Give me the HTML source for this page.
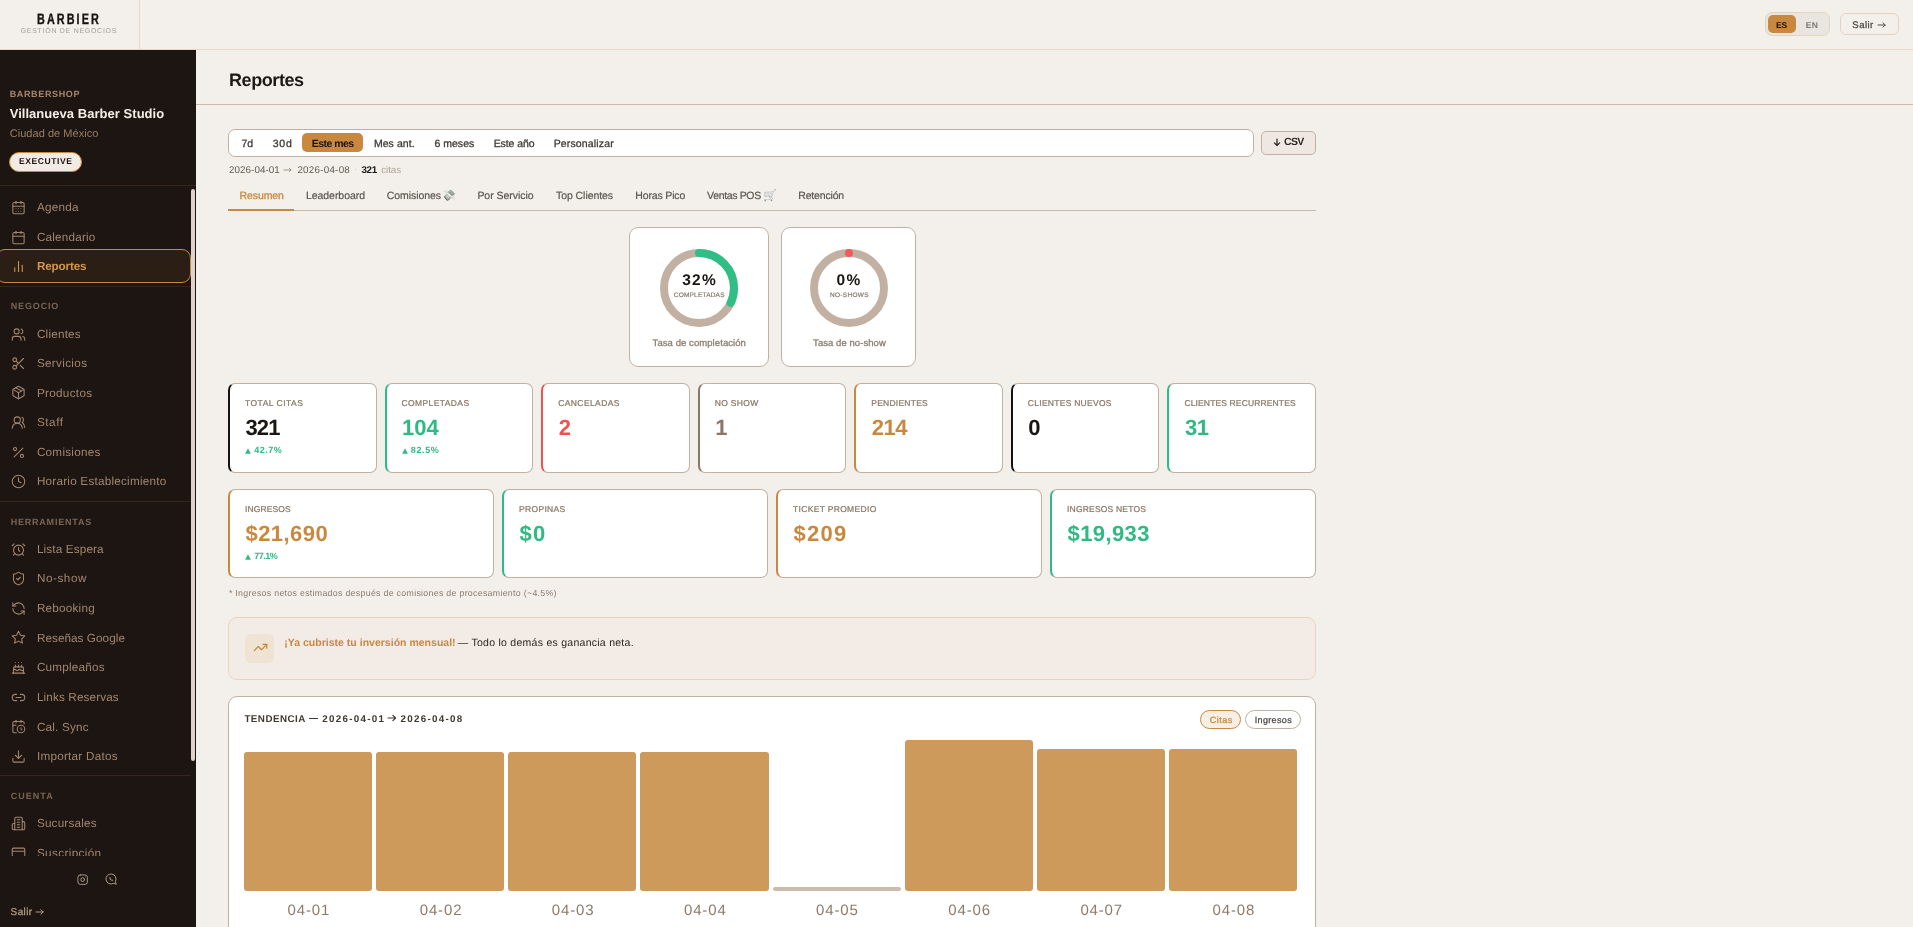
<!DOCTYPE html>
<html><head><meta charset="utf-8"><title>Reportes</title>
<style>
html,body{margin:0;padding:0}
body{width:1913px;height:927px;overflow:hidden;position:relative;background:#f3f0eb;font-family:"Liberation Sans", sans-serif}
.t{position:absolute;white-space:nowrap;line-height:1;font-family:"Liberation Sans", sans-serif;text-rendering:geometricPrecision}
b{font-weight:700}
</style></head><body>
<div id="root" style="position:absolute;left:0;top:0;width:1913px;height:927px;overflow:hidden;will-change:transform">
<div style="position:absolute;left:0px;top:0px;width:1913px;height:50px;box-sizing:border-box;background:#f3f0eb;border-bottom:1px solid #ead7c0"></div>
<div style="position:absolute;left:139px;top:0px;width:1px;height:49px;box-sizing:border-box;background:#ead7c0"></div>
<div class="t" style="left:37px;top:11.9px;font-size:15px;font-weight:700;color:#151210;letter-spacing:2.9px;transform:scaleX(0.72);transform-origin:0 0;-webkit-text-stroke:0.35px #151210">BARBIER</div>
<div class="t" style="left:20.70px;top:28.17px;font-size:7px;color:#a49e98;font-weight:400;letter-spacing:0.713px;">GESTIÓN DE NEGOCIOS</div>
<div style="position:absolute;left:1765px;top:12px;width:65px;height:24px;box-sizing:border-box;border:1px solid #e6d2bb;border-radius:7px;background:#e9e5e0"></div>
<div style="position:absolute;left:1768px;top:15px;width:28px;height:18px;box-sizing:border-box;background:#c8893f;border-radius:5px"></div>
<div class="t" style="left:1776.00px;top:20.70px;font-size:8.5px;color:#1a1410;font-weight:700;letter-spacing:-0.144px;">ES</div>
<div class="t" style="left:1805.80px;top:20.70px;font-size:8.5px;color:#7b7975;font-weight:700;letter-spacing:0.288px;">EN</div>
<div style="position:absolute;left:1840px;top:13px;width:59px;height:22px;box-sizing:border-box;border:1px solid #e6d2bb;border-radius:6px"></div>
<div class="t" style="left:1852.30px;top:20.76px;font-size:9.5px;color:#4a4541;font-weight:400;letter-spacing:0.496px;-webkit-text-stroke:0.27px #4a4541;">Salir</div>
<svg style="position:absolute;left:1876.9px;top:19.6px" width="9.199999999999818" height="10" viewBox="1876.9 19.6 9.199999999999818 10"><path d="M1877.9 24.6 H1885.1 M1882.8999999999999 22.400000000000002 L1885.1 24.6 L1882.8999999999999 26.8" fill="none" stroke="#4f4a46" stroke-width="1.0" stroke-linecap="round" stroke-linejoin="round"/></svg>
<div style="position:absolute;left:0px;top:50px;width:196px;height:877px;box-sizing:border-box;background:#1c1511"></div>
<div class="t" style="left:9.70px;top:89.78px;font-size:9px;color:#a8876a;font-weight:700;letter-spacing:0.643px;">BARBERSHOP</div>
<div class="t" style="left:9.70px;top:107.00px;font-size:13px;color:#f4eee7;font-weight:700;letter-spacing:0.037px;">Villanueva Barber Studio</div>
<div class="t" style="left:9.70px;top:128.89px;font-size:11px;color:#9a7f68;font-weight:400;letter-spacing:0.043px;">Ciudad de México</div>
<div style="position:absolute;left:9px;top:152px;width:73px;height:20px;box-sizing:border-box;background:#f2ebe3;border:1.5px solid #c8893f;border-radius:10px"></div>
<div class="t" style="left:18.90px;top:157.20px;font-size:8.5px;color:#1c1511;font-weight:700;letter-spacing:0.614px;">EXECUTIVE</div>
<div style="position:absolute;left:0px;top:185px;width:196px;height:1px;box-sizing:border-box;background:#33261c"></div>
<div style="position:absolute;left:0;top:186px;width:196px;height:670px;overflow:hidden">
<div style="position:absolute;left:-4px;top:63px;width:195px;height:34px;box-sizing:border-box;background:#2b1f15;border:1px solid #c8893f;border-radius:9px"></div>
<svg style="position:absolute;left:11.00px;top:13.70px" width="15" height="15" viewBox="0 0 24 24" fill="none" stroke="#a2866f" stroke-width="1.7" stroke-linecap="round" stroke-linejoin="round"><path d="M8 2v4"/><path d="M16 2v4"/><rect width="18" height="18" x="3" y="4" rx="2"/><path d="M3 10h18"/><path d="M8 14h.01"/><path d="M12 14h.01"/><path d="M16 14h.01"/><path d="M8 18h.01"/><path d="M12 18h.01"/><path d="M16 18h.01"/></svg>
<div class="t" style="left:36.90px;top:16.20px;font-size:11.7px;color:#a2866f;font-weight:400;letter-spacing:0.261px;">Agenda</div>
<svg style="position:absolute;left:11.00px;top:43.80px" width="15" height="15" viewBox="0 0 24 24" fill="none" stroke="#a2866f" stroke-width="1.7" stroke-linecap="round" stroke-linejoin="round"><path d="M8 2v4"/><path d="M16 2v4"/><rect width="18" height="18" x="3" y="4" rx="2"/><path d="M3 10h18"/></svg>
<div class="t" style="left:36.90px;top:46.30px;font-size:11.7px;color:#a2866f;font-weight:400;letter-spacing:0.208px;">Calendario</div>
<svg style="position:absolute;left:11.00px;top:72.90px" width="15" height="15" viewBox="0 0 24 24" fill="none" stroke="#d4964a" stroke-width="1.7" stroke-linecap="round" stroke-linejoin="round"><line x1="18" x2="18" y1="20" y2="10"/><line x1="12" x2="12" y1="20" y2="4"/><line x1="6" x2="6" y1="20" y2="14"/></svg>
<div class="t" style="left:36.90px;top:75.40px;font-size:11.7px;color:#d4964a;font-weight:700;letter-spacing:-0.139px;">Reportes</div>
<div style="position:absolute;left:0px;top:100px;width:191px;height:1px;box-sizing:border-box;background:#33261c"></div>
<div class="t" style="left:10.70px;top:115.58px;font-size:9px;color:#7a6554;font-weight:700;letter-spacing:0.864px;">NEGOCIO</div>
<svg style="position:absolute;left:11.00px;top:140.50px" width="15" height="15" viewBox="0 0 24 24" fill="none" stroke="#a2866f" stroke-width="1.7" stroke-linecap="round" stroke-linejoin="round"><path d="M16 21v-2a4 4 0 0 0-4-4H6a4 4 0 0 0-4 4v2"/><circle cx="9" cy="7" r="4"/><path d="M22 21v-2a4 4 0 0 0-3-3.87"/><path d="M16 3.13a4 4 0 0 1 0 7.75"/></svg>
<div class="t" style="left:36.90px;top:143.00px;font-size:11.7px;color:#a2866f;font-weight:400;letter-spacing:0.224px;">Clientes</div>
<svg style="position:absolute;left:11.00px;top:169.80px" width="15" height="15" viewBox="0 0 24 24" fill="none" stroke="#a2866f" stroke-width="1.7" stroke-linecap="round" stroke-linejoin="round"><circle cx="6" cy="6" r="3"/><path d="M8.12 8.12 12 12"/><path d="M20 4 8.12 15.88"/><circle cx="6" cy="18" r="3"/><path d="M14.8 14.8 20 20"/></svg>
<div class="t" style="left:36.90px;top:172.30px;font-size:11.7px;color:#a2866f;font-weight:400;letter-spacing:0.335px;">Servicios</div>
<svg style="position:absolute;left:11.00px;top:199.30px" width="15" height="15" viewBox="0 0 24 24" fill="none" stroke="#a2866f" stroke-width="1.7" stroke-linecap="round" stroke-linejoin="round"><path d="M11 21.73a2 2 0 0 0 2 0l7-4A2 2 0 0 0 21 16V8a2 2 0 0 0-1-1.73l-7-4a2 2 0 0 0-2 0l-7 4A2 2 0 0 0 3 8v8a2 2 0 0 0 1 1.73z"/><path d="M12 22V12"/><path d="m3.3 7 7.703 4.734a2 2 0 0 0 1.994 0L20.7 7"/><path d="m7.5 4.27 9 5.15"/></svg>
<div class="t" style="left:36.90px;top:201.80px;font-size:11.7px;color:#a2866f;font-weight:400;letter-spacing:0.322px;">Productos</div>
<svg style="position:absolute;left:11.00px;top:228.90px" width="15" height="15" viewBox="0 0 24 24" fill="none" stroke="#a2866f" stroke-width="1.7" stroke-linecap="round" stroke-linejoin="round"><path d="M18 21a8 8 0 0 0-16 0"/><circle cx="10" cy="8" r="5"/><path d="M22 20c0-3.37-2-6.5-4-8a5 5 0 0 0-.45-8.3"/></svg>
<div class="t" style="left:36.90px;top:231.40px;font-size:11.7px;color:#a2866f;font-weight:400;letter-spacing:0.593px;">Staff</div>
<svg style="position:absolute;left:11.00px;top:258.60px" width="15" height="15" viewBox="0 0 24 24" fill="none" stroke="#a2866f" stroke-width="1.7" stroke-linecap="round" stroke-linejoin="round"><line x1="19" x2="5" y1="5" y2="19"/><circle cx="6.5" cy="6.5" r="2.5"/><circle cx="17.5" cy="17.5" r="2.5"/></svg>
<div class="t" style="left:36.90px;top:261.10px;font-size:11.7px;color:#a2866f;font-weight:400;letter-spacing:0.271px;">Comisiones</div>
<svg style="position:absolute;left:11.00px;top:287.90px" width="15" height="15" viewBox="0 0 24 24" fill="none" stroke="#a2866f" stroke-width="1.7" stroke-linecap="round" stroke-linejoin="round"><circle cx="12" cy="12" r="10"/><polyline points="12 6 12 12 16 14"/></svg>
<div class="t" style="left:36.90px;top:290.40px;font-size:11.7px;color:#a2866f;font-weight:400;letter-spacing:0.237px;">Horario Establecimiento</div>
<div style="position:absolute;left:0px;top:315px;width:191px;height:1px;box-sizing:border-box;background:#33261c"></div>
<div class="t" style="left:10.70px;top:331.98px;font-size:9px;color:#7a6554;font-weight:700;letter-spacing:0.787px;">HERRAMIENTAS</div>
<svg style="position:absolute;left:11.00px;top:355.60px" width="15" height="15" viewBox="0 0 24 24" fill="none" stroke="#a2866f" stroke-width="1.7" stroke-linecap="round" stroke-linejoin="round"><circle cx="12" cy="13" r="8"/><path d="M12 9v4l2 2"/><path d="M5 3 2 6"/><path d="m22 6-3-3"/><path d="M6.38 18.7 4 21"/><path d="M17.64 18.67 20 21"/></svg>
<div class="t" style="left:36.90px;top:358.10px;font-size:11.7px;color:#a2866f;font-weight:400;letter-spacing:0.157px;">Lista Espera</div>
<svg style="position:absolute;left:11.00px;top:384.80px" width="15" height="15" viewBox="0 0 24 24" fill="none" stroke="#a2866f" stroke-width="1.7" stroke-linecap="round" stroke-linejoin="round"><path d="M20 13c0 5-3.5 7.5-7.66 8.95a1 1 0 0 1-.67-.01C7.5 20.5 4 18 4 13V6a1 1 0 0 1 1-1c2 0 4.5-1.2 6.24-2.72a1.17 1.17 0 0 1 1.52 0C14.51 3.81 17 5 19 5a1 1 0 0 1 1 1z"/><path d="m9 12 2 2 4-4"/></svg>
<div class="t" style="left:36.90px;top:387.30px;font-size:11.7px;color:#a2866f;font-weight:400;letter-spacing:0.562px;">No-show</div>
<svg style="position:absolute;left:11.00px;top:414.70px" width="15" height="15" viewBox="0 0 24 24" fill="none" stroke="#a2866f" stroke-width="1.7" stroke-linecap="round" stroke-linejoin="round"><path d="M21 12a9 9 0 0 0-9-9 9.75 9.75 0 0 0-6.74 2.74L3 8"/><path d="M3 3v5h5"/><path d="M3 12a9 9 0 0 0 9 9 9.75 9.75 0 0 0 6.74-2.74L21 16"/><path d="M16 16h5v5"/></svg>
<div class="t" style="left:36.90px;top:417.20px;font-size:11.7px;color:#a2866f;font-weight:400;letter-spacing:0.239px;">Rebooking</div>
<svg style="position:absolute;left:11.00px;top:444.30px" width="15" height="15" viewBox="0 0 24 24" fill="none" stroke="#a2866f" stroke-width="1.7" stroke-linecap="round" stroke-linejoin="round"><polygon points="12 2 15.09 8.26 22 9.27 17 14.14 18.18 21.02 12 17.77 5.82 21.02 7 14.14 2 9.27 8.91 8.26 12 2"/></svg>
<div class="t" style="left:36.90px;top:446.80px;font-size:11.7px;color:#a2866f;font-weight:400;letter-spacing:0.071px;">Reseñas Google</div>
<svg style="position:absolute;left:11.00px;top:473.80px" width="15" height="15" viewBox="0 0 24 24" fill="none" stroke="#a2866f" stroke-width="1.7" stroke-linecap="round" stroke-linejoin="round"><path d="M20 21v-8a2 2 0 0 0-2-2H6a2 2 0 0 0-2 2v8"/><path d="M4 16s.5-1 2-1 2.5 2 4 2 2.5-2 4-2 2.5 2 4 2 2-1 2-1"/><path d="M2 21h20"/><path d="M7 8v3"/><path d="M12 8v3"/><path d="M17 8v3"/><path d="M7 4h.01"/><path d="M12 4h.01"/><path d="M17 4h.01"/></svg>
<div class="t" style="left:36.90px;top:476.30px;font-size:11.7px;color:#a2866f;font-weight:400;letter-spacing:0.242px;">Cumpleaños</div>
<svg style="position:absolute;left:11.00px;top:503.70px" width="15" height="15" viewBox="0 0 24 24" fill="none" stroke="#a2866f" stroke-width="1.7" stroke-linecap="round" stroke-linejoin="round"><path d="M9 17H7A5 5 0 0 1 7 7h2"/><path d="M15 7h2a5 5 0 1 1 0 10h-2"/><line x1="8" x2="16" y1="12" y2="12"/></svg>
<div class="t" style="left:36.90px;top:506.20px;font-size:11.7px;color:#a2866f;font-weight:400;letter-spacing:0.146px;">Links Reservas</div>
<svg style="position:absolute;left:11.00px;top:533.20px" width="15" height="15" viewBox="0 0 24 24" fill="none" stroke="#a2866f" stroke-width="1.7" stroke-linecap="round" stroke-linejoin="round"><path d="M21 7.5V6a2 2 0 0 0-2-2H5a2 2 0 0 0-2 2v14a2 2 0 0 0 2 2h3.5"/><path d="M16 2v4"/><path d="M8 2v4"/><path d="M3 10h5"/><path d="M17.5 17.5 16 16.3V14"/><circle cx="16" cy="16" r="6"/></svg>
<div class="t" style="left:36.90px;top:535.70px;font-size:11.7px;color:#a2866f;font-weight:400;letter-spacing:0.211px;">Cal. Sync</div>
<svg style="position:absolute;left:11.00px;top:562.80px" width="15" height="15" viewBox="0 0 24 24" fill="none" stroke="#a2866f" stroke-width="1.7" stroke-linecap="round" stroke-linejoin="round"><path d="M21 15v4a2 2 0 0 1-2 2H5a2 2 0 0 1-2-2v-4"/><polyline points="7 10 12 15 17 10"/><line x1="12" x2="12" y1="15" y2="3"/></svg>
<div class="t" style="left:36.90px;top:565.30px;font-size:11.7px;color:#a2866f;font-weight:400;letter-spacing:0.262px;">Importar Datos</div>
<div style="position:absolute;left:0px;top:589px;width:191px;height:1px;box-sizing:border-box;background:#33261c"></div>
<div class="t" style="left:10.70px;top:605.58px;font-size:9px;color:#7a6554;font-weight:700;letter-spacing:1.031px;">CUENTA</div>
<svg style="position:absolute;left:11.00px;top:629.80px" width="15" height="15" viewBox="0 0 24 24" fill="none" stroke="#a2866f" stroke-width="1.7" stroke-linecap="round" stroke-linejoin="round"><path d="M6 22V4a2 2 0 0 1 2-2h8a2 2 0 0 1 2 2v18Z"/><path d="M6 12H4a2 2 0 0 0-2 2v6a2 2 0 0 0 2 2h2"/><path d="M18 9h2a2 2 0 0 1 2 2v9a2 2 0 0 1-2 2h-2"/><path d="M10 6h4"/><path d="M10 10h4"/><path d="M10 14h4"/><path d="M10 18h4"/></svg>
<div class="t" style="left:36.90px;top:632.30px;font-size:11.7px;color:#a2866f;font-weight:400;letter-spacing:0.208px;">Sucursales</div>
<svg style="position:absolute;left:11.00px;top:659.10px" width="15" height="15" viewBox="0 0 24 24" fill="none" stroke="#a2866f" stroke-width="1.7" stroke-linecap="round" stroke-linejoin="round"><rect width="20" height="14" x="2" y="5" rx="2"/><line x1="2" x2="22" y1="10" y2="10"/></svg>
<div class="t" style="left:36.90px;top:661.60px;font-size:11.7px;color:#a2866f;font-weight:400;letter-spacing:0.378px;">Suscripción</div>
</div>
<div style="position:absolute;left:191px;top:189px;width:4px;height:572px;box-sizing:border-box;background:#dcd3ca;border-radius:2px"></div>
<svg style="position:absolute;left:76.60px;top:873.80px" width="11.3" height="11.3" viewBox="0 0 24 24" fill="none" stroke="#ad9c8a" stroke-width="2" stroke-linecap="round" stroke-linejoin="round"><rect width="20" height="20" x="2" y="2" rx="5" ry="5"/><path d="M16 11.37A4 4 0 1 1 12.63 8 4 4 0 0 1 16 11.37z"/><line x1="17.5" x2="17.51" y1="6.5" y2="6.5"/></svg>
<svg style="position:absolute;left:105.3px;top:873px" width="12" height="12" viewBox="0 0 12 12"><path d="M8.5 10.33 A5 5 0 1 1 10.33 8.5 L11.2 11.2 Z" fill="none" stroke="#ad9c8a" stroke-width="1" stroke-linejoin="round"/><path d="M4.2 4.6c.2 1.9 1.4 3.1 3.3 3.3l.7-.9-1-.6-.5.4c-.6-.3-1-.7-1.3-1.3l.4-.5-.6-1z" fill="#ad9c8a"/></svg>
<div class="t" style="left:10.60px;top:908.13px;font-size:10px;color:#b39d88;font-weight:400;letter-spacing:0.396px;-webkit-text-stroke:0.28px #b39d88;">Salir</div>
<svg style="position:absolute;left:35px;top:906.6px" width="9.200000000000003" height="10" viewBox="35 906.6 9.200000000000003 10"><path d="M36 911.6 H43.2 M40.900000000000006 909.3000000000001 L43.2 911.6 L40.900000000000006 913.9" fill="none" stroke="#b39d88" stroke-width="1.0" stroke-linecap="round" stroke-linejoin="round"/></svg>
<div class="t" style="left:229.00px;top:70.96px;font-size:18px;color:#1c1917;font-weight:700;letter-spacing:-0.419px;">Reportes</div>
<div style="position:absolute;left:196px;top:104px;width:1717px;height:1px;box-sizing:border-box;background:#cdb9a6"></div>
<div style="position:absolute;left:228px;top:129px;width:1026px;height:28px;box-sizing:border-box;background:#fff;border:1px solid #c2b0a0;border-radius:7px"></div>
<div style="position:absolute;left:302px;top:133px;width:61px;height:19px;box-sizing:border-box;background:#c8893f;border-radius:5px"></div>
<div class="t" style="left:241.60px;top:138.51px;font-size:10.5px;color:#3d3935;font-weight:400;letter-spacing:-0.087px;-webkit-text-stroke:0.29px #3d3935;">7d</div>
<div class="t" style="left:272.70px;top:138.51px;font-size:10.5px;color:#3d3935;font-weight:400;letter-spacing:0.784px;-webkit-text-stroke:0.29px #3d3935;">30d</div>
<div class="t" style="left:311.70px;top:138.51px;font-size:10.5px;color:#1a1410;font-weight:700;letter-spacing:-0.518px;">Este mes</div>
<div class="t" style="left:373.90px;top:138.51px;font-size:10.5px;color:#3d3935;font-weight:400;letter-spacing:0.074px;-webkit-text-stroke:0.29px #3d3935;">Mes ant.</div>
<div class="t" style="left:434.40px;top:138.51px;font-size:10.5px;color:#3d3935;font-weight:400;letter-spacing:0.035px;-webkit-text-stroke:0.29px #3d3935;">6 meses</div>
<div class="t" style="left:493.70px;top:138.51px;font-size:10.5px;color:#3d3935;font-weight:400;letter-spacing:-0.079px;-webkit-text-stroke:0.29px #3d3935;">Este año</div>
<div class="t" style="left:553.70px;top:138.51px;font-size:10.5px;color:#3d3935;font-weight:400;letter-spacing:0.148px;-webkit-text-stroke:0.29px #3d3935;">Personalizar</div>
<div style="position:absolute;left:1261px;top:131px;width:55px;height:24px;box-sizing:border-box;background:#efe8e2;border:1px solid #c2b0a0;border-radius:5px"></div>
<svg style="position:absolute;left:1273.1px;top:138.2px" width="8" height="8.5" viewBox="1273.1 138.2 8 8.5"><path d="M1277.1 139.2 V145.7 M1274.5 143.1 L1277.1 145.7 L1279.6999999999998 143.1" fill="none" stroke="#2b2622" stroke-width="1.25" stroke-linecap="round" stroke-linejoin="round"/></svg>
<div class="t" style="left:1283.90px;top:137.21px;font-size:10.5px;color:#2b2622;font-weight:700;letter-spacing:-0.597px;">CSV</div>
<div class="t" style="left:229.00px;top:166.00px;font-size:9.8px;color:#625a53;font-weight:400;letter-spacing:0.064px;">2026-04-01</div>
<svg style="position:absolute;left:283.2px;top:164.7px" width="9.0" height="10" viewBox="283.2 164.7 9.0 10"><path d="M284.2 169.7 H291.2 M289.5 168.0 L291.2 169.7 L289.5 171.39999999999998" fill="none" stroke="#9b8a7a" stroke-width="0.9" stroke-linecap="round" stroke-linejoin="round"/></svg>
<div class="t" style="left:297.40px;top:166.00px;font-size:9.8px;color:#625a53;font-weight:400;letter-spacing:0.253px;">2026-04-08</div>
<div style="position:absolute;left:354.5px;top:169px;width:1.3px;height:1.3px;box-sizing:border-box;background:#c9b9aa;border-radius:1px"></div>
<div class="t" style="left:361.50px;top:166.00px;font-size:9.8px;color:#1c1917;font-weight:700;letter-spacing:-0.33px;">321</div>
<div class="t" style="left:381.20px;top:166.00px;font-size:9.8px;color:#b3a394;font-weight:400;letter-spacing:-0.064px;">citas</div>
<div style="position:absolute;left:228px;top:210px;width:1088px;height:1px;box-sizing:border-box;background:#cdb9a6"></div>
<div style="position:absolute;left:228px;top:208.5px;width:66px;height:2px;box-sizing:border-box;background:#c8893f"></div>
<div class="t" style="left:239.60px;top:190.91px;font-size:10.5px;color:#c8893f;font-weight:400;letter-spacing:-0.109px;-webkit-text-stroke:0.29px #c8893f;">Resumen</div>
<div class="t" style="left:305.90px;top:190.91px;font-size:10.5px;color:#5c5550;font-weight:400;letter-spacing:-0.036px;-webkit-text-stroke:0.19px #5c5550;">Leaderboard</div>
<div class="t" style="left:386.70px;top:190.91px;font-size:10.5px;color:#5c5550;font-weight:400;letter-spacing:-0.062px;-webkit-text-stroke:0.19px #5c5550;">Comisiones</div>
<div class="t" style="left:442.3px;top:190.99px;font-size:11px;filter:grayscale(0.85) opacity(0.8)">💸</div>
<div class="t" style="left:477.40px;top:190.91px;font-size:10.5px;color:#5c5550;font-weight:400;letter-spacing:-0.037px;-webkit-text-stroke:0.19px #5c5550;">Por Servicio</div>
<div class="t" style="left:556.00px;top:190.91px;font-size:10.5px;color:#5c5550;font-weight:400;letter-spacing:-0.062px;-webkit-text-stroke:0.19px #5c5550;">Top Clientes</div>
<div class="t" style="left:635.30px;top:190.91px;font-size:10.5px;color:#5c5550;font-weight:400;letter-spacing:-0.151px;-webkit-text-stroke:0.19px #5c5550;">Horas Pico</div>
<div class="t" style="left:707.10px;top:190.91px;font-size:10.5px;color:#5c5550;font-weight:400;letter-spacing:-0.345px;-webkit-text-stroke:0.19px #5c5550;">Ventas POS</div>
<div class="t" style="left:763.6px;top:190.99px;font-size:11px;filter:grayscale(0.85) opacity(0.8)">🛒</div>
<div class="t" style="left:798.30px;top:190.91px;font-size:10.5px;color:#5c5550;font-weight:400;letter-spacing:-0.173px;-webkit-text-stroke:0.19px #5c5550;">Retención</div>
<div style="position:absolute;left:629px;top:227px;width:140px;height:140px;box-sizing:border-box;background:#fff;border:1px solid #c2b0a0;border-radius:9px"></div>
<svg style="position:absolute;left:659px;top:248px" width="80" height="80"><circle cx="40" cy="40" r="35" fill="none" stroke="#c2b1a2" stroke-width="8"/><circle cx="40" cy="40" r="35" fill="none" stroke="#2fbe85" stroke-width="8" stroke-linecap="round" stroke-dasharray="70.37 219.91" transform="rotate(-90 40 40)"/></svg>
<div style="position:absolute;left:781px;top:227px;width:135px;height:140px;box-sizing:border-box;background:#fff;border:1px solid #c2b0a0;border-radius:9px"></div>
<svg style="position:absolute;left:809px;top:248px" width="80" height="80"><circle cx="40" cy="40" r="35" fill="none" stroke="#c2b1a2" stroke-width="8"/><circle cx="40" cy="5" r="4" fill="#ef5a5a"/></svg>
<div class="t" style="left:682.20px;top:273.28px;font-size:15.5px;color:#1a1614;font-weight:700;letter-spacing:1.3px;">32%</div>
<div class="t" style="left:673.80px;top:292.70px;font-size:6.5px;color:#85766a;font-weight:400;letter-spacing:0.206px;-webkit-text-stroke:0.18px #85766a;">COMPLETADAS</div>
<div class="t" style="left:652.60px;top:338.76px;font-size:9.5px;color:#8a7a6b;font-weight:400;letter-spacing:0.074px;-webkit-text-stroke:0.27px #8a7a6b;">Tasa de completación</div>
<div class="t" style="left:836.60px;top:273.28px;font-size:15.5px;color:#1a1614;font-weight:700;letter-spacing:1.3px;">0%</div>
<div class="t" style="left:829.90px;top:292.70px;font-size:6.5px;color:#85766a;font-weight:400;letter-spacing:0.317px;-webkit-text-stroke:0.18px #85766a;">NO-SHOWS</div>
<div class="t" style="left:813.10px;top:338.76px;font-size:9.5px;color:#8a7a6b;font-weight:400;letter-spacing:0.062px;-webkit-text-stroke:0.27px #8a7a6b;">Tasa de no-show</div>
<div style="position:absolute;left:228.0px;top:383px;width:148.57px;height:90px;box-sizing:border-box;background:#fff;border:1px solid #c2b0a0;border-left:2px solid #151210;border-radius:7px"></div>
<div class="t" style="left:245.00px;top:398.80px;font-size:8.5px;color:#8a7866;font-weight:400;letter-spacing:0.484px;-webkit-text-stroke:0.24px #8a7866;">TOTAL CITAS</div>
<div class="t" style="left:245.50px;top:416.58px;font-size:22px;color:#1a1614;font-weight:700;letter-spacing:-0.9px;">321</div>
<svg style="position:absolute;left:245.3px;top:447.6px" width="6" height="6" viewBox="0 0 6 6"><path d="M3 0.2 L5.9 5.8 L0.1 5.8Z" fill="#2fb983"/></svg>
<div class="t" style="left:254.20px;top:446.38px;font-size:9px;color:#2fb983;font-weight:700;letter-spacing:0.517px;">42.7%</div>
<div style="position:absolute;left:384.57px;top:383px;width:148.57px;height:90px;box-sizing:border-box;background:#fff;border:1px solid #c2b0a0;border-left:2px solid #2fb983;border-radius:7px"></div>
<div class="t" style="left:401.57px;top:398.80px;font-size:8.5px;color:#8a7866;font-weight:400;letter-spacing:0.389px;-webkit-text-stroke:0.24px #8a7866;">COMPLETADAS</div>
<div class="t" style="left:402.07px;top:416.58px;font-size:22px;color:#2fb983;font-weight:700;letter-spacing:0.041px;">104</div>
<svg style="position:absolute;left:401.87px;top:447.6px" width="6" height="6" viewBox="0 0 6 6"><path d="M3 0.2 L5.9 5.8 L0.1 5.8Z" fill="#2fb983"/></svg>
<div class="t" style="left:410.77px;top:446.38px;font-size:9px;color:#2fb983;font-weight:700;letter-spacing:0.617px;">82.5%</div>
<div style="position:absolute;left:541.14px;top:383px;width:148.57px;height:90px;box-sizing:border-box;background:#fff;border:1px solid #c2b0a0;border-left:2px solid #ef5350;border-radius:7px"></div>
<div class="t" style="left:558.14px;top:398.80px;font-size:8.5px;color:#8a7866;font-weight:400;letter-spacing:0.418px;-webkit-text-stroke:0.24px #8a7866;">CANCELADAS</div>
<div class="t" style="left:558.64px;top:416.58px;font-size:22px;color:#ef5350;font-weight:700;letter-spacing:0px;">2</div>
<div style="position:absolute;left:697.71px;top:383px;width:148.57px;height:90px;box-sizing:border-box;background:#fff;border:1px solid #c2b0a0;border-left:2px solid #8a7866;border-radius:7px"></div>
<div class="t" style="left:714.71px;top:398.80px;font-size:8.5px;color:#8a7866;font-weight:400;letter-spacing:0.34px;-webkit-text-stroke:0.24px #8a7866;">NO SHOW</div>
<div class="t" style="left:715.21px;top:416.58px;font-size:22px;color:#8a7866;font-weight:700;letter-spacing:0px;">1</div>
<div style="position:absolute;left:854.29px;top:383px;width:148.57px;height:90px;box-sizing:border-box;background:#fff;border:1px solid #c2b0a0;border-left:2px solid #c8893f;border-radius:7px"></div>
<div class="t" style="left:871.29px;top:398.80px;font-size:8.5px;color:#8a7866;font-weight:400;letter-spacing:0.241px;-webkit-text-stroke:0.24px #8a7866;">PENDIENTES</div>
<div class="t" style="left:871.79px;top:416.58px;font-size:22px;color:#c8893f;font-weight:700;letter-spacing:-0.459px;">214</div>
<div style="position:absolute;left:1010.86px;top:383px;width:148.57px;height:90px;box-sizing:border-box;background:#fff;border:1px solid #c2b0a0;border-left:2px solid #151210;border-radius:7px"></div>
<div class="t" style="left:1027.86px;top:398.80px;font-size:8.5px;color:#8a7866;font-weight:400;letter-spacing:0.269px;-webkit-text-stroke:0.24px #8a7866;">CLIENTES NUEVOS</div>
<div class="t" style="left:1028.36px;top:416.58px;font-size:22px;color:#1a1614;font-weight:700;letter-spacing:0px;">0</div>
<div style="position:absolute;left:1167.43px;top:383px;width:148.57px;height:90px;box-sizing:border-box;background:#fff;border:1px solid #c2b0a0;border-left:2px solid #2fb983;border-radius:7px"></div>
<div class="t" style="left:1184.43px;top:398.80px;font-size:8.5px;color:#8a7866;font-weight:400;letter-spacing:0.135px;-webkit-text-stroke:0.24px #8a7866;">CLIENTES RECURRENTES</div>
<div class="t" style="left:1184.93px;top:416.58px;font-size:22px;color:#2fb983;font-weight:700;letter-spacing:-0.384px;">31</div>
<div style="position:absolute;left:228.0px;top:489px;width:266.0px;height:89px;box-sizing:border-box;background:#fff;border:1px solid #c2b0a0;border-left:2px solid #c8893f;border-radius:7px"></div>
<div class="t" style="left:245.00px;top:504.80px;font-size:8.5px;color:#8a7866;font-weight:400;letter-spacing:0.104px;-webkit-text-stroke:0.24px #8a7866;">INGRESOS</div>
<div class="t" style="left:245.50px;top:522.58px;font-size:22px;color:#c8893f;font-weight:700;letter-spacing:0.445px;">$21,690</div>
<svg style="position:absolute;left:245.3px;top:553.6px" width="6" height="6" viewBox="0 0 6 6"><path d="M3 0.2 L5.9 5.8 L0.1 5.8Z" fill="#2fb983"/></svg>
<div class="t" style="left:254.20px;top:552.38px;font-size:9px;color:#2fb983;font-weight:700;letter-spacing:-0.458px;">77.1%</div>
<div style="position:absolute;left:502.0px;top:489px;width:266.0px;height:89px;box-sizing:border-box;background:#fff;border:1px solid #c2b0a0;border-left:2px solid #2fb983;border-radius:7px"></div>
<div class="t" style="left:519.00px;top:504.80px;font-size:8.5px;color:#8a7866;font-weight:400;letter-spacing:0.323px;-webkit-text-stroke:0.24px #8a7866;">PROPINAS</div>
<div class="t" style="left:519.50px;top:522.58px;font-size:22px;color:#2fb983;font-weight:700;letter-spacing:1.3px;">$0</div>
<div style="position:absolute;left:776.0px;top:489px;width:266.0px;height:89px;box-sizing:border-box;background:#fff;border:1px solid #c2b0a0;border-left:2px solid #c8893f;border-radius:7px"></div>
<div class="t" style="left:793.00px;top:504.80px;font-size:8.5px;color:#8a7866;font-weight:400;letter-spacing:0.327px;-webkit-text-stroke:0.24px #8a7866;">TICKET PROMEDIO</div>
<div class="t" style="left:793.50px;top:522.58px;font-size:22px;color:#c8893f;font-weight:700;letter-spacing:1.3px;">$209</div>
<div style="position:absolute;left:1050.0px;top:489px;width:266.0px;height:89px;box-sizing:border-box;background:#fff;border:1px solid #c2b0a0;border-left:2px solid #2fb983;border-radius:7px"></div>
<div class="t" style="left:1067.00px;top:504.80px;font-size:8.5px;color:#8a7866;font-weight:400;letter-spacing:0.195px;-webkit-text-stroke:0.24px #8a7866;">INGRESOS NETOS</div>
<div class="t" style="left:1067.50px;top:522.58px;font-size:22px;color:#2fb983;font-weight:700;letter-spacing:0.395px;">$19,933</div>
<div class="t" style="left:228.90px;top:588.75px;font-size:8.8px;color:#8a7a6b;font-weight:400;letter-spacing:0.296px;">* Ingresos netos estimados después de comisiones de procesamiento (~4.5%)</div>
<div style="position:absolute;left:228px;top:617px;width:1088px;height:63px;box-sizing:border-box;background:#f3ebe5;border:1px solid #e8d4bd;border-radius:9px"></div>
<div style="position:absolute;left:245px;top:634px;width:29px;height:29px;box-sizing:border-box;background:#efe3d4;border-radius:6px"></div>
<svg style="position:absolute;left:252.90px;top:639.80px" width="15" height="15" viewBox="0 0 24 24" fill="none" stroke="#c8893f" stroke-width="2" stroke-linecap="round" stroke-linejoin="round"><polyline points="22 7 13.5 15.5 8.5 10.5 2 17"/><polyline points="16 7 22 7 22 13"/></svg>
<div class="t" style="left:284.30px;top:638.01px;font-size:10.5px;color:#c8893f;font-weight:700;letter-spacing:0.01px;">¡Ya cubriste tu inversión mensual!</div>
<div class="t" style="left:457.70px;top:638.01px;font-size:10.5px;color:#2a2420;font-weight:400;letter-spacing:0.267px;">— Todo lo demás es ganancia neta.</div>
<div style="position:absolute;left:228px;top:696px;width:1088px;height:260px;box-sizing:border-box;background:#fff;border:1px solid #c2b0a0;border-radius:9px"></div>
<div class="t" style="left:244.40px;top:714.60px;font-size:9.8px;color:#3f3833;font-weight:700;letter-spacing:0.48px;">TENDENCIA</div>
<div style="position:absolute;left:308.8px;top:718px;width:9.2px;height:1.1px;box-sizing:border-box;background:#3f3833"></div>
<div class="t" style="left:322.20px;top:714.60px;font-size:9.8px;color:#3f3833;font-weight:700;letter-spacing:1.3px;">2026-04-01</div>
<svg style="position:absolute;left:387.3px;top:713.3px" width="9.599999999999966" height="10" viewBox="387.3 713.3 9.599999999999966 10"><path d="M388.3 718.3 H395.9 M393.2 715.5999999999999 L395.9 718.3 L393.2 721.0" fill="none" stroke="#3f3833" stroke-width="1.2" stroke-linecap="round" stroke-linejoin="round"/></svg>
<div class="t" style="left:400.40px;top:714.60px;font-size:9.8px;color:#3f3833;font-weight:700;letter-spacing:1.3px;">2026-04-08</div>
<div style="position:absolute;left:1200px;top:710px;width:41px;height:19px;box-sizing:border-box;background:#f7efe6;border:1px solid #c8893f;border-radius:10px"></div>
<div class="t" style="left:1209.80px;top:716.18px;font-size:9px;color:#c8893f;font-weight:400;letter-spacing:0.471px;-webkit-text-stroke:0.25px #c8893f;">Citas</div>
<div style="position:absolute;left:1245px;top:710px;width:56px;height:19px;box-sizing:border-box;background:#fff;border:1px solid #c2b0a0;border-radius:10px"></div>
<div class="t" style="left:1254.70px;top:716.18px;font-size:9px;color:#4a4541;font-weight:400;letter-spacing:0.353px;-webkit-text-stroke:0.25px #4a4541;">Ingresos</div>
<div style="position:absolute;left:244.0px;top:752px;width:128.14px;height:139px;box-sizing:border-box;background:#cd9a5c;border-radius:3px"></div>
<div class="t" style="left:287.57px;top:903.30px;font-size:15px;color:#8c7a68;font-weight:400;letter-spacing:0.856px;">04-01</div>
<div style="position:absolute;left:376.14px;top:752px;width:128.14px;height:139px;box-sizing:border-box;background:#cd9a5c;border-radius:3px"></div>
<div class="t" style="left:419.71px;top:903.30px;font-size:15px;color:#8c7a68;font-weight:400;letter-spacing:0.856px;">04-02</div>
<div style="position:absolute;left:508.27px;top:752px;width:128.14px;height:139px;box-sizing:border-box;background:#cd9a5c;border-radius:3px"></div>
<div class="t" style="left:551.84px;top:903.30px;font-size:15px;color:#8c7a68;font-weight:400;letter-spacing:0.856px;">04-03</div>
<div style="position:absolute;left:640.41px;top:752px;width:128.14px;height:139px;box-sizing:border-box;background:#cd9a5c;border-radius:3px"></div>
<div class="t" style="left:683.98px;top:903.30px;font-size:15px;color:#8c7a68;font-weight:400;letter-spacing:0.856px;">04-04</div>
<div style="position:absolute;left:772.55px;top:887px;width:128.14px;height:4px;box-sizing:border-box;background:#cbbcad;border-radius:2px"></div>
<div class="t" style="left:816.12px;top:903.30px;font-size:15px;color:#8c7a68;font-weight:400;letter-spacing:0.856px;">04-05</div>
<div style="position:absolute;left:904.69px;top:740px;width:128.14px;height:151px;box-sizing:border-box;background:#cd9a5c;border-radius:3px"></div>
<div class="t" style="left:948.26px;top:903.30px;font-size:15px;color:#8c7a68;font-weight:400;letter-spacing:0.856px;">04-06</div>
<div style="position:absolute;left:1036.82px;top:749px;width:128.14px;height:142px;box-sizing:border-box;background:#cd9a5c;border-radius:3px"></div>
<div class="t" style="left:1080.39px;top:903.30px;font-size:15px;color:#8c7a68;font-weight:400;letter-spacing:0.856px;">04-07</div>
<div style="position:absolute;left:1168.96px;top:749px;width:128.14px;height:142px;box-sizing:border-box;background:#cd9a5c;border-radius:3px"></div>
<div class="t" style="left:1212.53px;top:903.30px;font-size:15px;color:#8c7a68;font-weight:400;letter-spacing:0.856px;">04-08</div>
</div>
</body></html>
